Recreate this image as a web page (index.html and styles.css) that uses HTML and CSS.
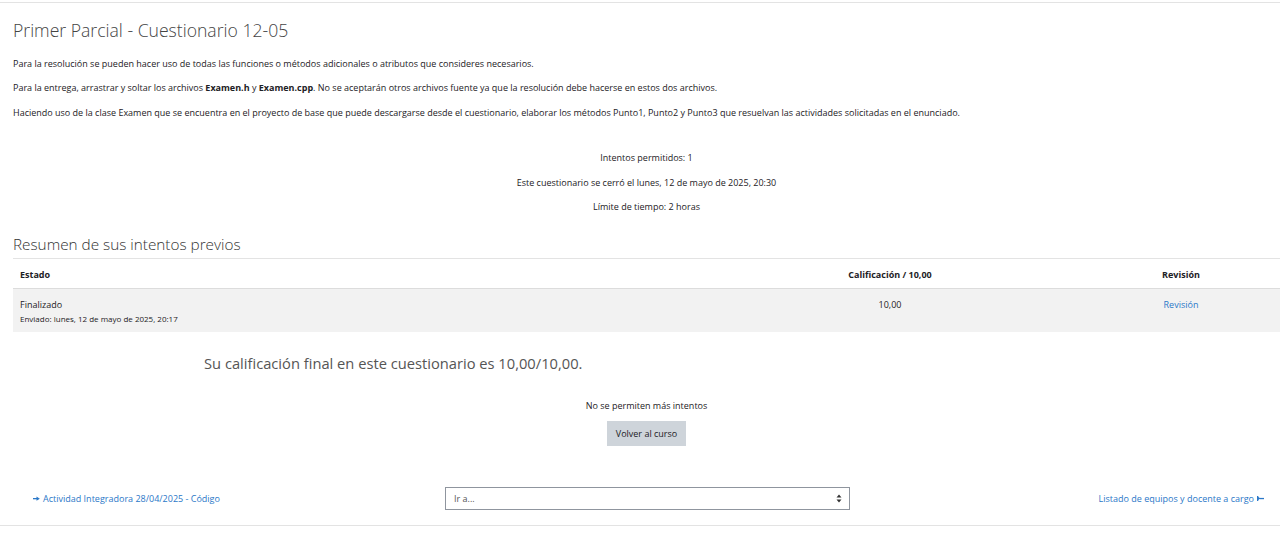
FILE: index.html
```html
<!DOCTYPE html>
<html lang="es">
<head>
<meta charset="utf-8">
<title>Primer Parcial - Cuestionario 12-05</title>
<link rel="stylesheet" href="styles.css">
</head>
<body>
<div class="page">
  <main class="main">
    <h2 class="title">Primer Parcial - Cuestionario 12-05</h2>
    <div class="intro">
      <p>Para la resolución se pueden hacer uso de todas las funciones o métodos adicionales o atributos que consideres necesarios.</p>
      <p>Para la entrega, arrastrar y soltar los archivos <b>Examen.h</b> y <b>Examen.cpp</b>. No se aceptarán otros archivos fuente ya que la resolución debe hacerse en estos dos archivos.</p>
      <p>Haciendo uso de la clase Examen que se encuentra en el proyecto de base que puede descargarse desde el cuestionario, elaborar los métodos Punto1, Punto2 y Punto3 que resuelvan las actividades solicitadas en el enunciado.</p>
    </div>
    <div class="info">
      <p>Intentos permitidos: 1</p>
      <p>Este cuestionario se cerró el lunes, 12 de mayo de 2025, 20:30</p>
      <p>Límite de tiempo: 2 horas</p>
    </div>
    <h3 class="summary">Resumen de sus intentos previos</h3>
    <table class="attempts">
      <thead>
        <tr>
          <th class="c-state">Estado</th>
          <th class="c-grade">Calificación / 10,00</th>
          <th class="c-review">Revisión</th>
        </tr>
      </thead>
      <tbody>
        <tr>
          <td class="c-state">Finalizado<span class="sub">Enviado: lunes, 12 de mayo de 2025, 20:17</span></td>
          <td class="c-grade">10,00</td>
          <td class="c-review"><a href="#">Revisión</a></td>
        </tr>
      </tbody>
    </table>
    <h3 class="feedback">Su calificación final en este cuestionario es 10,00/10,00.</h3>
    <div class="actions">
      <p>No se permiten más intentos</p>
      <button class="btn" type="button">Volver al curso</button>
    </div>
    <nav class="activity-nav">
      <a class="prev" href="#"><svg width="7" height="5" viewBox="0 0 7 5"><rect x="0" y="2" width="4" height="1.3" fill="currentColor"/><path d="M3.5 0.5 L6.8 2.65 L3.5 4.8 Z" fill="currentColor"/></svg>Actividad Integradora 28/04/2025 - Código</a>
      <div class="jump">
        <span>Ir a...</span>
        <svg width="6" height="9" viewBox="0 0 6 9"><path d="M0.5 3.6 L3 0.6 L5.5 3.6 Z M0.5 5.4 L3 8.4 L5.5 5.4 Z" fill="#333"/></svg>
      </div>
      <a class="next" href="#">Listado de equipos y docente a cargo<svg width="7" height="5" viewBox="0 0 7 5"><path d="M0.3 0.3 L3.5 2.4 L0.3 4.6 Z" fill="currentColor"/><rect x="0" y="0" width="1.3" height="5" fill="currentColor"/><rect x="3" y="1.9" width="4" height="1.3" fill="currentColor"/></svg></a>
    </nav>
  </main>
</div>
</body>
</html>
```
FILE: styles.css
```css
* { box-sizing: border-box; }
html, body {
  margin: 0;
  background: #fff;
  overflow: hidden;
}
body {
  font-family: "Open Sans", "Noto Sans", sans-serif;
  font-size: 9px;
  color: #1d2125;
}
.page {
  border-top: 1px solid #e3e3e3;
  margin-top: 2px;
}
.main {
  padding: 0 0 0 13px;
  border-bottom: 1px solid #e3e3e3;
}
.title {
  font-size: 17.6px;
  font-weight: 300;
  color: #444;
  line-height: 24px;
  margin: 15px 0 13.5px;
}
.intro p, .info p {
  margin: 0 0 9.5px;
  line-height: 15px;
}
.info {
  text-align: center;
  margin-top: 30.5px;
}
.info p:last-child { margin-bottom: 0; }
b { font-weight: 700; }
.summary {
  font-size: 15.3px;
  font-weight: 300;
  color: #333;
  line-height: 20px;
  margin: 19.5px 0 4px;
}
.attempts {
  width: 100%;
  border-collapse: collapse;
  border-top: 1px solid #e3e3e3;
}
.attempts th {
  font-weight: 700;
  line-height: 15px;
  padding: 8px 7px 6px;
  border-bottom: 1px solid #dcdcdc;
}
.attempts td {
  background: #f2f2f2;
  vertical-align: top;
  line-height: 14px;
  padding: 9px 7px 6px;
  height: 42px;
}
.attempts th.c-state, .attempts td.c-state { text-align: left; width: 685px; }
.attempts .c-grade { text-align: center; width: 384px; }
.attempts .c-review { text-align: center; }
.sub {
  display: block;
  font-size: 8px;
  line-height: 14px;
}
a { color: #2b78c8; text-decoration: none; }
.feedback {
  font-size: 14.7px;
  font-weight: 400;
  color: #555;
  line-height: 20px;
  margin: 21px 0 0 191px;
}
.actions {
  text-align: center;
  margin-top: 25px;
}
.actions p {
  margin: 0 0 8px;
  line-height: 15px;
}
.btn {
  font-family: inherit;
  font-size: 9px;
  color: #1d2125;
  background: #ced4da;
  border: 0;
  height: 25px;
  padding: 0 9px;
  border-radius: 0;
}
.activity-nav {
  display: grid;
  grid-template-columns: 412px 405px 1fr;
  align-items: center;
  margin-top: 41px;
  padding: 0 16px 0 20px;
  height: 23px;
  margin-bottom: 15px;
}
.activity-nav a { display: inline-flex; align-items: center; gap: 3px; }
.activity-nav .prev { justify-self: start; }
.activity-nav .next { justify-self: end; }
.jump {
  width: 405px;
  height: 23px;
  border: 1px solid #8f959e;
  display: flex;
  align-items: center;
  justify-content: space-between;
  padding: 0 7px 0 8px;
  color: #555;
}
```
